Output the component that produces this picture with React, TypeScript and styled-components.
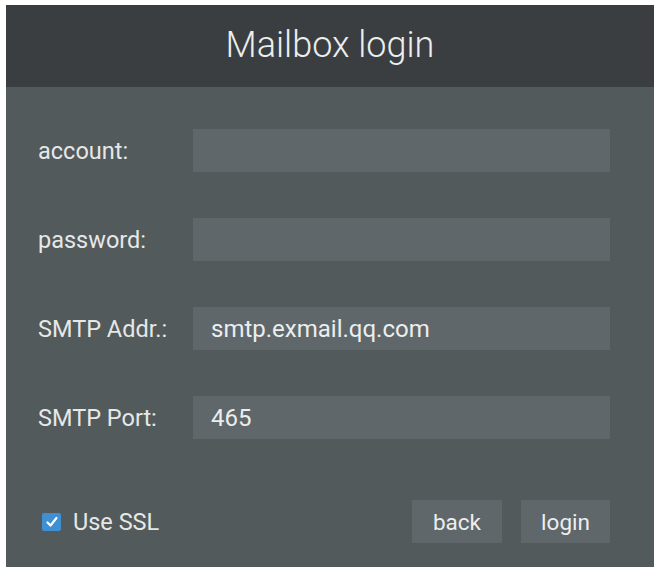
import React from "react";
import styled, { createGlobalStyle } from "styled-components";

const Global = createGlobalStyle`
  html, body { margin: 0; padding: 0; background: #ffffff; }
  body { font-family: Roboto, "Noto Sans", sans-serif; }
  * { box-sizing: border-box; }
`;

const Panel = styled.div`
  margin: 5px 5px 8px 6px;
  width: 648px;
  height: 562px;
  background: #525a5b;
  display: flex;
  flex-direction: column;
`;

const Header = styled.div`
  height: 82px;
  background: #3b3e40;
  display: flex;
  align-items: center;
  justify-content: center;
  color: #eceeee;
  font-size: 36px;
  font-weight: 300;
  padding-bottom: 2px;
`;

const Body = styled.div`
  flex: 1;
  display: flex;
  flex-direction: column;
  padding: 42px 44px 24px 32px;
`;

const Form = styled.div`
  display: grid;
  grid-template-columns: 155px 1fr;
  grid-auto-rows: 43px;
  row-gap: 46px;
  align-items: center;
`;

const Label = styled.div`
  color: #e6e8e8;
  font-size: 23.5px;
`;

const Field = styled.div`
  height: 43px;
  background: #5f676b;
  color: #eceeee;
  font-size: 24px;
  display: flex;
  align-items: center;
  padding-left: 18px;
`;

const Footer = styled.div`
  margin-top: auto;
  display: flex;
  align-items: center;
`;

const Check = styled.label`
  display: flex;
  align-items: center;
  gap: 12px;
  color: #e6e8e8;
  font-size: 23.5px;
  margin-left: 4px;
`;

const Box = styled.span`
  width: 19px;
  height: 18px;
  background: #3f8fd2;
  border-radius: 2px;
  display: flex;
  align-items: center;
  justify-content: center;
`;

const Buttons = styled.div`
  margin-left: auto;
  display: flex;
  gap: 19px;
`;

const Button = styled.div<{ $w: number }>`
  width: ${(p) => p.$w}px;
  height: 43px;
  background: #5f676b;
  color: #eceeee;
  font-size: 22.5px;
  display: flex;
  align-items: center;
  justify-content: center;
`;

export default function App() {
  return (
    <>
      <Global />
      <Panel>
        <Header>Mailbox login</Header>
        <Body>
          <Form>
            <Label>account:</Label>
            <Field />
            <Label>password:</Label>
            <Field />
            <Label>SMTP Addr.:</Label>
            <Field>smtp.exmail.qq.com</Field>
            <Label>SMTP Port:</Label>
            <Field>465</Field>
          </Form>
          <Footer>
            <Check>
              <Box>
                <svg width="14" height="14" viewBox="0 0 14 14">
                  <path d="M2.5 7.5 L5.5 10.5 L11.5 3" stroke="#ffffff" strokeWidth="2.2" fill="none" strokeLinecap="round" strokeLinejoin="round" />
                </svg>
              </Box>
              Use SSL
            </Check>
            <Buttons>
              <Button $w={90}>back</Button>
              <Button $w={89}>login</Button>
            </Buttons>
          </Footer>
        </Body>
      </Panel>
    </>
  );
}
